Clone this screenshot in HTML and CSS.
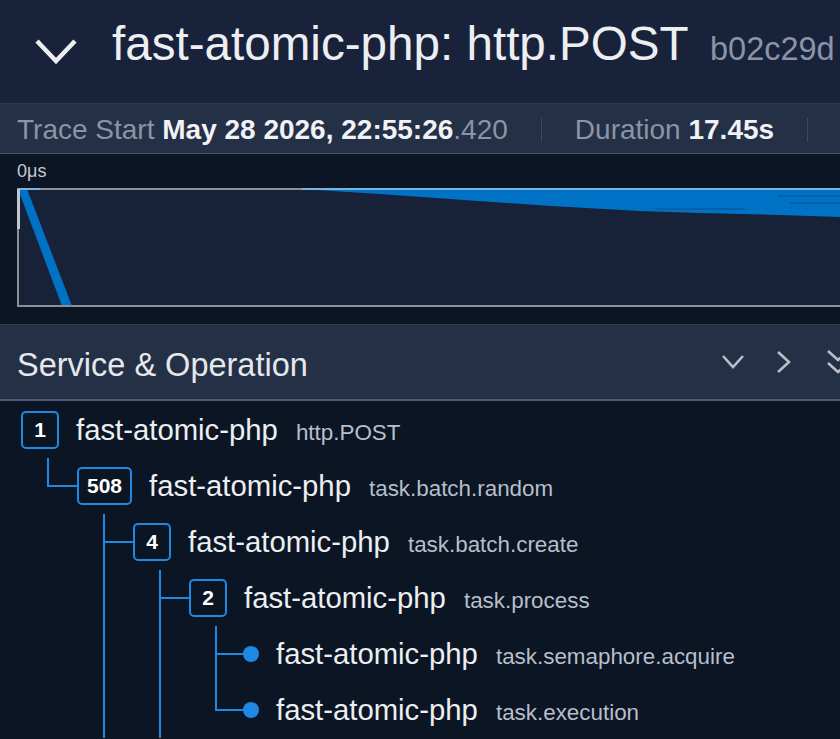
FILE: index.html
```html
<!DOCTYPE html>
<html lang="en">
<head>
    <meta charset="UTF-8">
    <meta name="viewport" content="width=device-width, initial-scale=1.0">
    <title>fast-atomic-php: http.POST</title>
    <link rel="stylesheet" href="styles.css">
</head>
<body>
    <div class="trace-page">
        <header class="trace-header">
            <svg class="collapse-icon" width="44" height="28" viewBox="0 0 44 28">
                <polyline points="3,4 22,24 41,4" fill="none" stroke="currentColor" stroke-width="4.5"/>
            </svg>
            <h1 class="trace-title">fast-atomic-php: http.POST <span class="trace-id">b02c29d</span></h1>
        </header>

        <div class="trace-meta">
            <span class="meta-item"><span class="meta-label">Trace Start</span> <strong>May 28 2026, 22:55:26</strong><span class="meta-ms">.420</span></span>
            <span class="meta-divider"></span>
            <span class="meta-item"><span class="meta-label">Duration</span> <strong>17.45s</strong></span>
            <span class="meta-divider"></span>
            <span class="meta-item"><span class="meta-label">Services</span> <strong>1</strong></span>
        </div>

        <div class="minimap">
            <div class="tick-label">0μs</div>
            <!-- span overview, drawn in page coordinates -->
            <svg class="minimap-canvas" viewBox="17 189 823 119" preserveAspectRatio="none">
                <rect x="17" y="189" width="830" height="119" fill="#172238"/>
                <polygon points="300,190 840,190 840,218 780,216 700,214 640,212 551,207 450,200 380,195" fill="#0072c6"/>
                <line x1="778" y1="197" x2="840" y2="197" stroke="#0a4f8c" stroke-width="1"/>
                <line x1="655" y1="210" x2="745" y2="210" stroke="#0a4f8c" stroke-width="1"/>
                <line x1="790" y1="204" x2="840" y2="204" stroke="#0a4f8c" stroke-width="1"/>
                <polygon points="18,190 27,190 72,307 62,307" fill="#0072c6"/>
                <line x1="17" y1="190" x2="840" y2="190" stroke="#8a8f99" stroke-width="2"/>
                <line x1="302" y1="190" x2="840" y2="190" stroke="#7fb1dc" stroke-width="2"/>
                <line x1="18" y1="190" x2="40" y2="190" stroke="#7fb1dc" stroke-width="2"/>
                <line x1="18" y1="189" x2="18" y2="308" stroke="#8a8f99" stroke-width="2"/>
                <line x1="17" y1="307" x2="840" y2="307" stroke="#8a8f99" stroke-width="2"/>
                <rect x="16" y="190" width="4" height="40" fill="#c2c6ce"/>
            </svg>
        </div>

        <div class="section-header">
            <span class="section-title">Service &amp; Operation</span>
            <div class="section-tools">
                <svg class="tool-icon" width="24" height="24" viewBox="0 0 24 24">
                    <polyline points="2,6 12,17 22,6" fill="none" stroke="currentColor" stroke-width="2.6"/>
                </svg>
                <svg class="tool-icon" width="24" height="24" viewBox="0 0 24 24">
                    <polyline points="7,2 18,12 7,22" fill="none" stroke="currentColor" stroke-width="2.6"/>
                </svg>
                <svg class="tool-icon tool-icon-last" width="24" height="24" viewBox="0 0 24 24">
                    <polyline points="2,1 12,10 22,1" fill="none" stroke="currentColor" stroke-width="2.6"/>
                    <polyline points="2,13 12,22 22,13" fill="none" stroke="currentColor" stroke-width="2.6"/>
                </svg>
            </div>
        </div>

        <div class="span-tree">
            <div class="span-row">
                <span class="badge">1</span>
                <span class="span-label"><span class="span-name">fast-atomic-php</span><span class="span-op">http.POST</span></span>
            </div>
            <div class="span-row">
                <span class="guide guide-end"></span>
                <span class="badge">508</span>
                <span class="span-label"><span class="span-name">fast-atomic-php</span><span class="span-op">task.batch.random</span></span>
            </div>
            <div class="span-row">
                <span class="guide"></span>
                <span class="guide guide-tee"></span>
                <span class="badge">4</span>
                <span class="span-label"><span class="span-name">fast-atomic-php</span><span class="span-op">task.batch.create</span></span>
            </div>
            <div class="span-row">
                <span class="guide"></span>
                <span class="guide guide-pass"></span>
                <span class="guide guide-tee"></span>
                <span class="badge">2</span>
                <span class="span-label"><span class="span-name">fast-atomic-php</span><span class="span-op">task.process</span></span>
            </div>
            <div class="span-row">
                <span class="guide"></span>
                <span class="guide guide-pass"></span>
                <span class="guide guide-pass"></span>
                <span class="guide guide-tee"></span>
                <span class="leaf-dot"></span>
                <span class="span-label"><span class="span-name">fast-atomic-php</span><span class="span-op">task.semaphore.acquire</span></span>
            </div>
            <div class="span-row">
                <span class="guide"></span>
                <span class="guide guide-pass"></span>
                <span class="guide guide-pass"></span>
                <span class="guide guide-end"></span>
                <span class="leaf-dot"></span>
                <span class="span-label"><span class="span-name">fast-atomic-php</span><span class="span-op">task.execution</span></span>
            </div>
        </div>
    </div>
</body>
</html>
```

FILE: styles.css
```css
:root {
    --header-bg: #18223a;
    --bar-bg: #243045;
    --panel-bg: #0b1523;
    --canvas-bg: #172238;
    --text-color: #eceef2;
    --muted-color: #8a94a6;
    --op-color: #b7bfca;
    --accent: #1e88e5;
}

body {
    font-family: 'Liberation Sans', Arial, sans-serif;
    background-color: var(--panel-bg);
    color: var(--text-color);
    margin: 0;
    overflow: hidden;
}

.trace-page {
    width: 840px;
    overflow: hidden;
}

.trace-header {
    display: flex;
    align-items: center;
    height: 104px;
    box-sizing: border-box;
    padding: 0 0 10px 34px;
    background-color: var(--header-bg);
    border-bottom: 1px solid #2c3750;
    white-space: nowrap;
}

.collapse-icon {
    flex: none;
    margin: 8px 34px 0 0;
    color: #eceef2;
}

.trace-title {
    margin: 0;
    font-size: 47.6px;
    font-weight: normal;
    line-height: 54px;
}

.trace-id {
    margin-left: 9px;
    font-size: 32.5px;
    color: var(--muted-color);
}

.trace-meta {
    display: flex;
    align-items: center;
    height: 50px;
    padding: 2px 0 0 17px;
    box-sizing: border-box;
    background-color: var(--bar-bg);
    border-bottom: 1px solid #4a5670;
    font-size: 28px;
    white-space: nowrap;
}

.meta-item {
    flex: none;
}

.meta-label,
.meta-ms {
    color: var(--muted-color);
}

.meta-item strong {
    color: #f1f2f5;
}

.meta-divider {
    flex: none;
    width: 1px;
    height: 24px;
    margin: 0 33px;
    background-color: #3c4862;
}

.minimap {
    height: 170px;
    box-sizing: border-box;
    padding: 5px 0 17px 17px;
    background-color: var(--panel-bg);
}

.tick-label {
    font-size: 18px;
    line-height: 24px;
    color: #c5cad3;
}

.minimap-canvas {
    display: block;
    width: 823px;
    height: 119px;
    margin-top: 5px;
}

.section-header {
    display: flex;
    align-items: center;
    justify-content: space-between;
    height: 77px;
    padding: 6px 0 0 17px;
    box-sizing: border-box;
    background-color: var(--bar-bg);
    border-top: 1px solid #2f3a52;
    border-bottom: 2px solid #4a5a78;
    overflow: hidden;
}

.section-title {
    font-size: 32.5px;
    color: #e6e8ec;
}

.section-tools {
    display: flex;
    gap: 26px;
    margin-right: -10px;
    margin-top: -6px;
    flex: none;
    color: #b8bec8;
}

.tool-icon-last {
    margin-left: 5px;
}

.span-tree {
    padding-top: 1px;
    background-color: var(--panel-bg);
}

.span-row {
    display: flex;
    align-items: center;
    height: 56px;
    padding-left: 21px;
    white-space: nowrap;
}

.guide {
    flex: none;
    width: 56px;
    align-self: stretch;
}

.guide-pass {
    background: linear-gradient(var(--accent), var(--accent)) 26px 0 / 2px 100% no-repeat;
}

.guide-tee {
    background:
        linear-gradient(var(--accent), var(--accent)) 26px 0 / 2px 100% no-repeat,
        linear-gradient(var(--accent), var(--accent)) 26px 27px / 30px 2px no-repeat;
}

.guide-end {
    background:
        linear-gradient(var(--accent), var(--accent)) 26px 0 / 2px 29px no-repeat,
        linear-gradient(var(--accent), var(--accent)) 26px 27px / 30px 2px no-repeat;
}

.badge {
    flex: none;
    display: flex;
    align-items: center;
    justify-content: center;
    min-width: 38px;
    height: 38px;
    box-sizing: border-box;
    padding: 0 8px;
    margin-right: 17px;
    border: 2px solid var(--accent);
    border-radius: 5px;
    font-size: 21px;
    font-weight: bold;
    color: #ffffff;
}

.leaf-dot {
    flex: none;
    width: 16px;
    height: 16px;
    margin: 0 17px 0 -2px;
    border-radius: 50%;
    background-color: var(--accent);
}

.span-label {
    display: flex;
    align-items: baseline;
    gap: 18px;
}

.span-name {
    font-size: 29.3px;
    color: var(--text-color);
}

.span-op {
    font-size: 22.4px;
    color: var(--op-color);
}
```
